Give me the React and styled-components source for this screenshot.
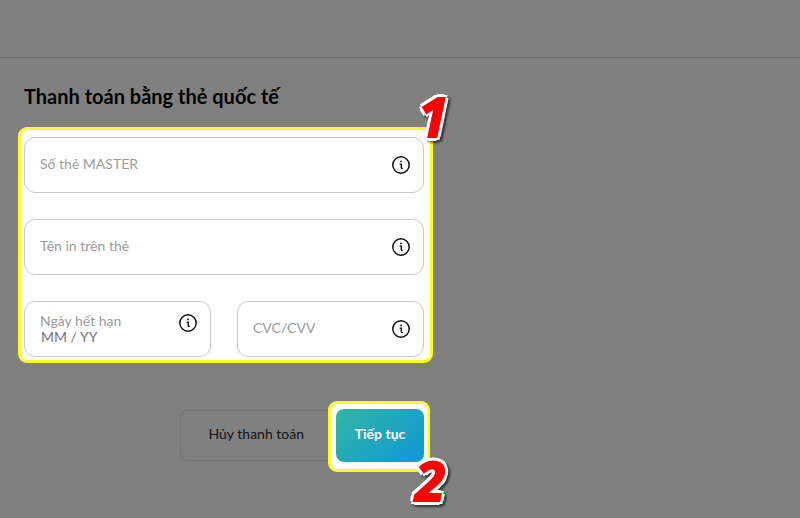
import React from 'react';
import styled, { createGlobalStyle } from 'styled-components';

const GlobalStyle = createGlobalStyle`
    * {
        box-sizing: border-box;
    }

    body {
        margin: 0;
        min-height: 100vh;
        background: #808080;
        font-family: Lato, "Noto Sans", sans-serif;
        font-size: 14px;
        color: #000;
    }
`;

const TopBar = styled.header`
    height: 58px;
    border-bottom: 1px solid #696969;
`;

const Main = styled.main`
    max-width: 451px;
    padding: 26px 18px;
`;

const Title = styled.h1`
    margin: 0;
    padding-left: 6px;
    font-size: 20px;
    line-height: 24px;
    font-weight: 700;
`;

const Highlight = styled.div`
    position: relative;
    background: #fff;
    border: 3px solid #ffff1e;
    border-radius: 9px;
    padding: 5px 3px 7px 5px;
`;

const CardArea = styled(Highlight)`
    margin-top: 19px;
    padding: 7px 6px 3px 3px;
`;

const Fields = styled.div`
    display: grid;
    grid-template-columns: 1fr 1fr;
    gap: 26px;
`;

const FieldBox = styled.div`
    grid-column: ${props => (props.$half ? 'auto' : '1 / -1')};
    display: flex;
    align-items: ${props => (props.$floating ? 'flex-start' : 'center')};
    height: 56px;
    padding: ${props => (props.$floating ? '11px 12px 0 15px' : '0 12px 0 15px')};
    border: 1px solid #c8c8cb;
    border-radius: 11px;
`;

const FieldText = styled.div`
    flex: 1;
    min-width: 0;
    display: grid;
    grid-template-areas: ${props => (props.$floating ? '"label" "input"' : '"both"')};
    padding-bottom: ${props => (props.$floating ? '0' : '2px')};

    label {
        grid-area: ${props => (props.$floating ? 'label' : 'both')};
        line-height: 16px;
        color: #9b9b9b;
    }

    input {
        grid-area: ${props => (props.$floating ? 'input' : 'both')};
        width: 100%;
        height: 16px;
        border: 0;
        padding: 0 1px;
        background: transparent;
        font: inherit;
        line-height: 16px;
        outline: none;
    }

    input::placeholder {
        color: #757575;
        opacity: 1;
    }
`;

const InfoButton = styled.button`
    display: flex;
    width: 20px;
    height: 20px;
    padding: 0;
    border: 0;
    background: none;
    color: #111;
`;

const Actions = styled.div`
    display: flex;
    align-items: center;
    justify-content: flex-end;
    margin-top: 38px;
    padding-right: 3px;
`;

const CancelButton = styled.button`
    height: 51px;
    margin-bottom: 2px;
    padding: 0 24px 4px 27px;
    border: 1px solid #747474;
    border-right: 0;
    border-radius: 8px 0 0 8px;
    background: transparent;
    font: inherit;
    color: #111;
`;

const SubmitButton = styled.button`
    display: block;
    width: 88px;
    height: 53px;
    padding: 0 0 4px;
    border: 0;
    border-radius: 8px;
    background: linear-gradient(135deg, #33b5a5, #0d97d6);
    font: inherit;
    font-weight: 700;
    color: #fff;
`;

const Step = styled.span`
    position: absolute;
    right: ${props => props.$right};
    top: ${props => props.$top};
    padding: 4px;
    font-family: "Open Sans", sans-serif;
    font-size: 54px;
    line-height: 64px;
    font-weight: 700;
    font-style: italic;
    color: #f00;
    -webkit-text-stroke: 2px #f00;
    text-shadow:
        4px 0 #fff,
        -4px 0 #fff,
        0 4px #fff,
        0 -4px #fff,
        3px 3px #fff,
        -3px 3px #fff,
        3px -3px #fff,
        -3px -3px #fff;
    filter: drop-shadow(2px 2px 1px rgba(0, 0, 0, 0.6));
    pointer-events: none;
`;

function InfoIcon() {
    return (
        <svg width="20" height="20" viewBox="0 0 20 20" fill="none" stroke="currentColor" aria-hidden="true">
            <circle cx="10" cy="10" r="8.2" strokeWidth="1.5" />
            <path d="M8.6 9.1h1.7v4.1M10 13.4h1.8" strokeWidth="1.4" />
            <circle cx="10" cy="6.4" r="0.9" fill="currentColor" stroke="none" />
        </svg>
    );
}

function Field(props) {
    return (
        <FieldBox $half={props.half} $floating={props.floating}>
            <FieldText $floating={props.floating}>
                <label htmlFor={props.id}>{props.label}</label>
                <input id={props.id} type="text" placeholder={props.placeholder} />
            </FieldText>
            <InfoButton type="button" aria-label={props.label}>
                <InfoIcon />
            </InfoButton>
        </FieldBox>
    );
}

function App() {
    return (
        <>
            <GlobalStyle />
            <TopBar />
            <Main>
                <Title>Thanh toán bằng thẻ quốc tế</Title>
                <form onSubmit={e => e.preventDefault()}>
                    <CardArea>
                        <Fields>
                            <Field id="number" label="Số thẻ MASTER" />
                            <Field id="name" label="Tên in trên thẻ" />
                            <Field id="expiry" label="Ngày hết hạn" placeholder="MM / YY" half floating />
                            <Field id="cvc" label="CVC/CVV" half />
                        </Fields>
                        <Step $right="-22px" $top="-50px">1</Step>
                    </CardArea>
                    <Actions>
                        <CancelButton type="button">Hủy thanh toán</CancelButton>
                        <Highlight>
                            <SubmitButton type="submit">Tiếp tục</SubmitButton>
                            <Step $right="-22px" $top="40px">2</Step>
                        </Highlight>
                    </Actions>
                </form>
            </Main>
        </>
    );
}

export default App;
